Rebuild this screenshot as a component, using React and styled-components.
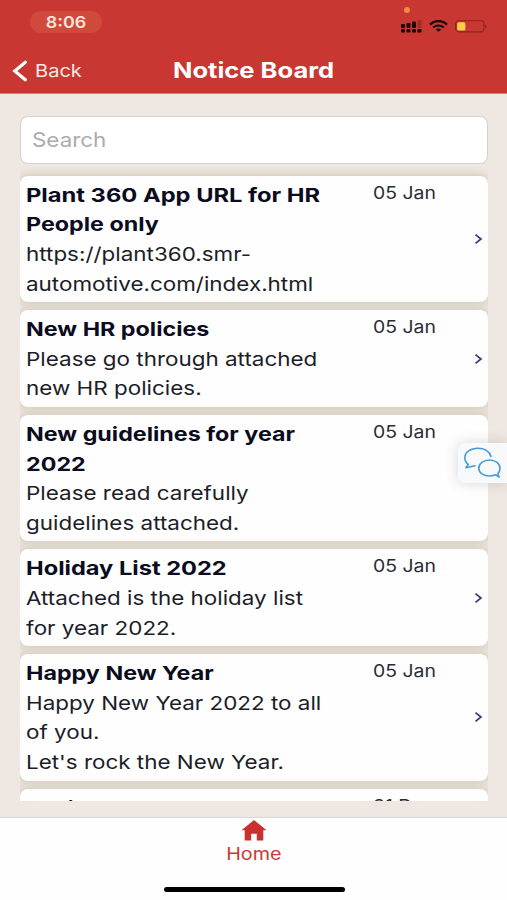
import React from "react";
import styled, { createGlobalStyle } from "styled-components";

const GlobalStyle = createGlobalStyle`
  * {
    box-sizing: border-box;
  }
  body {
    margin: 0;
    font-family: Inter, "Liberation Sans", sans-serif;
    background: #ffffff;
  }
`;

const Screen = styled.div`
  position: relative;
  display: flex;
  flex-direction: column;
  height: 900px;
  overflow: hidden;
  background: #efe8e2;
`;

const Header = styled.header`
  display: flex;
  flex-direction: column;
  flex: none;
  height: 94px;
  background: #c83732;
  border-bottom: 1px solid #dc7f78;
`;

const StatusBar = styled.div`
  position: relative;
  display: flex;
  justify-content: space-between;
  height: 49px;
  padding: 11px 20px 0 30px;
`;

const Clock = styled.div`
  display: flex;
  align-items: center;
  justify-content: center;
  width: 72px;
  height: 22px;
  border-radius: 11px;
  background: #cf4a3b;
`;

const StatusIcons = styled.div`
  display: flex;
  gap: 7px;
  padding-top: 9px;
`;

const MicDot = styled.div`
  position: absolute;
  top: 7px;
  left: 404px;
  width: 6px;
  height: 6px;
  border-radius: 50%;
  background: #ee8b3c;
`;

const NavBar = styled.div`
  display: grid;
  grid-template-columns: 1fr 161px 1fr;
  align-items: center;
  height: 46px;
`;

const BackButton = styled.div`
  display: flex;
  align-items: center;
  gap: 8px;
  padding-left: 12px;
`;

// Wide lettering: every label is stretched sideways from its left edge
const Label = styled.span`
  display: block;
  width: max-content;
  white-space: pre;
  font-size: ${(p) => p.$size || 19}px;
  font-weight: ${(p) => p.$weight || 400};
  line-height: ${(p) => p.$line || 29.6}px;
  color: ${(p) => p.$color || "#1c1d28"};
  transform: scaleX(${(p) => p.$stretch || 1.18});
  transform-origin: ${(p) => p.$origin || "left"} center;
`;

const Content = styled.main`
  display: flex;
  flex-direction: column;
  height: 723px;
  padding: 22px 19px 16px 20px;
`;

const SearchBox = styled.div`
  flex: none;
  display: flex;
  align-items: center;
  height: 48px;
  padding: 1px 0 0 11px;
  background: #ffffff;
  border: 1px solid #d5d1cd;
  border-radius: 8px;
`;

const List = styled.div`
  display: flex;
  flex-direction: column;
  gap: 8px;
  height: 637px;
  padding-top: 11.85px;
  overflow: hidden;
`;

const Card = styled.article`
  flex: none;
  display: grid;
  grid-template-columns: 347px 1fr 13px;
  padding: 5px 1px 3px 6px;
  background: #fefefe;
  border-radius: 8px;
  box-shadow: 0 0 8px 2px #d2cabb;
`;

const DateCell = styled.div`
  margin-top: -2px;
`;

const Arrow = styled.div`
  display: flex;
  align-items: center;
  padding-bottom: 2px;
`;

const ChatTab = styled.div`
  position: absolute;
  top: 443px;
  right: 0;
  width: 49px;
  height: 40px;
  padding: 4px 0 0 5px;
  background: #f8f9fa;
  border-radius: 7px 0 0 7px;
  box-shadow: 0 0 14px rgba(60, 60, 60, 0.2);
`;

const TabBar = styled.footer`
  display: flex;
  flex-direction: column;
  align-items: center;
  height: 84px;
  padding: 2px 0 0 1px;
  background: #fefefe;
  border-top: 1px solid #d9d7d5;
`;

const HomeIndicator = styled.div`
  width: 181px;
  height: 5px;
  margin-top: 20px;
  border-radius: 3px;
  background: #000000;
`;

const notices = [
  {
    title: ["Plant 360 App URL for HR", "People only"],
    body: ["https://plant360.smr-", "automotive.com/index.html"],
    date: "05 Jan",
    stretch: 1.248,
  },
  {
    title: ["New HR policies"],
    body: ["Please go through attached", "new HR policies."],
    date: "05 Jan",
  },
  {
    title: ["New guidelines for year", "2022"],
    body: ["Please read carefully", "guidelines attached."],
    date: "05 Jan",
    covered: true,
  },
  {
    title: ["Holiday List 2022"],
    body: ["Attached is the holiday list", "for year 2022."],
    date: "05 Jan",
    stretch: 1.243,
  },
  {
    title: ["Happy New Year"],
    body: ["Happy New Year 2022 to all", "of you.", "Let's rock the New Year."],
    date: "05 Jan",
  },
  {
    title: ["Christmas and New Year"],
    body: [],
    date: "31 Dec",
  },
];

const SignalIcon = () => (
  <svg width="21" height="13" viewBox="0 0 21 13" fill="#1d0808">
    <rect x="0" y="4" width="4" height="4" rx="1" />
    <rect x="5.5" y="3" width="4" height="5" rx="1" />
    <rect x="11" y="1.5" width="4" height="6.5" rx="1" />
    <rect x="16.5" y="0" width="4" height="8" rx="1" opacity="0.22" />
    <rect x="0" y="9" width="4" height="3.6" rx="1.2" />
    <rect x="5.5" y="9" width="4" height="3.6" rx="1.2" />
    <rect x="11" y="9" width="4" height="3.6" rx="1.2" />
    <rect x="16.5" y="9" width="4" height="3.6" rx="1.2" />
  </svg>
);

const WifiIcon = () => (
  <svg width="19" height="13" viewBox="0 0 19 13" fill="none" stroke="#1d0808">
    <path d="M1 4.6C5.8-.2 13.2-.2 18 4.6" strokeWidth="2.3" />
    <path d="M4.1 7.5C7.2 4.8 11.8 4.8 14.9 7.5" strokeWidth="2" />
    <path d="M6.8 9.4C8.4 8.2 10.6 8.2 12.2 9.4L9.5 11.8Z" fill="#1d0808" stroke="none" />
  </svg>
);

const BatteryIcon = () => (
  <svg width="32" height="13" viewBox="0 0 32 13">
    <rect x="0.6" y="0.7" width="28.4" height="11.2" rx="3.2" fill="none" stroke="#8f241f" strokeWidth="1.1" />
    <rect x="2.2" y="2.2" width="8.2" height="8.2" rx="1.5" fill="#f8cf45" />
    <path d="M30 4.3Q33 6.3 30 8.3Z" fill="#8f241f" />
  </svg>
);

const BackIcon = () => (
  <svg width="15" height="22" viewBox="0 0 15 22" fill="none" stroke="#ffffff" strokeWidth="3.2" strokeLinecap="round">
    <path d="M13.3 2.2L2.8 11L13.3 19.8" />
  </svg>
);

const ArrowIcon = () => (
  <svg width="9" height="12" viewBox="0 0 9 12" fill="none" stroke="#393878" strokeWidth="1.7">
    <path d="M1.5 1.6L7 6L1.5 10.4" />
  </svg>
);

const ChatIcon = () => (
  <svg width="40" height="32" viewBox="0 0 40 32" fill="none" stroke="#489bd5" strokeWidth="1.6" strokeLinecap="round" strokeLinejoin="round">
    <path d="M28 9.5C26.5 4.5 21.5 1.2 15 1.2C7.5 1.2 1.8 5.2 1.8 10.5C1.8 13.5 3.3 15.8 5.3 17.3L3 20.8L12 18.8" />
    <path d="M32.5 27.8C30.8 28.6 28.8 29 26.5 29C20.5 29 15.8 25.7 15.8 21.2C15.8 16.7 20.5 13 26.5 13C32.5 13 37 16.7 37 21.2C37 23.4 36.2 25.2 34.8 26.5L36.2 30L32.5 27.8Z" />
  </svg>
);

const HomeIcon = () => (
  <svg width="26" height="21" viewBox="0 0 26 21" fill="#c9312f">
    <path d="M13 0L25.5 10.2H22.3V20.5H15.8V13.8H10.2V20.5H3.7V10.2H.5Z" />
  </svg>
);

const Notice = ({ notice }) => (
  <Card>
    <div>
      {notice.title.map((line, i) => (
        <Label
          key={line}
          $weight={700}
          $color="#0b0c20"
          $stretch={(i === 0 && notice.stretch) || 1.226}
        >
          {line}
        </Label>
      ))}
      {notice.body.map((line) => (
        <Label key={line}>{line}</Label>
      ))}
    </div>
    <DateCell>
      <Label $size={17} $color="#2b2b33" $stretch={1.14}>
        {notice.date}
      </Label>
    </DateCell>
    <Arrow>{!notice.covered && <ArrowIcon />}</Arrow>
  </Card>
);

const App = () => {
  return (
    <Screen>
      <GlobalStyle />
      <Header>
        <StatusBar>
          <Clock>
            <Label $size={16} $weight={600} $color="#fbe3dc" $line={22} $stretch={1.12} $origin="center">
              8:06
            </Label>
          </Clock>
          <MicDot />
          <StatusIcons>
            <SignalIcon />
            <WifiIcon />
            <BatteryIcon />
          </StatusIcons>
        </StatusBar>
        <NavBar>
          <BackButton>
            <BackIcon />
            <Label $size={17} $color="#fde9e5" $line={24}>
              Back
            </Label>
          </BackButton>
          <Label $size={21} $weight={700} $color="#ffffff" $line={31} $stretch={1.215}>
            Notice Board
          </Label>
        </NavBar>
      </Header>
      <Content>
        <SearchBox>
          <Label $size={20} $color="#acacac" $stretch={1.12}>
            Search
          </Label>
        </SearchBox>
        <List>
          {notices.map((notice) => (
            <Notice key={notice.title[0]} notice={notice} />
          ))}
        </List>
      </Content>
      <TabBar>
        <HomeIcon />
        <Label $size={17} $color="#c73a38" $line={26} $stretch={1.16} $origin="center">
          Home
        </Label>
        <HomeIndicator />
      </TabBar>
      <ChatTab>
        <ChatIcon />
      </ChatTab>
    </Screen>
  );
};

export default App;
